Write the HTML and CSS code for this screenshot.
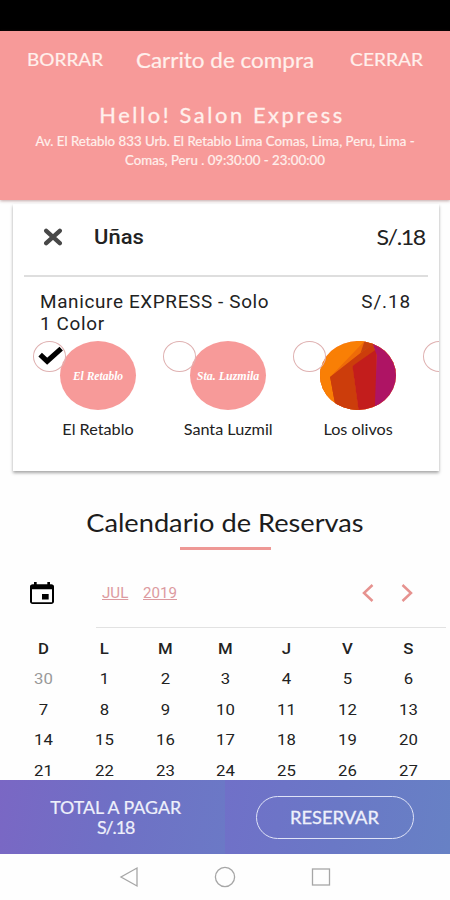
FILE: index.html
```html
<!DOCTYPE html>
<html lang="es">
<head>
<meta charset="utf-8">
<title>Carrito de compra</title>
<link rel="stylesheet" href="styles.css">
</head>
<body>
<div class="screen">
  <div class="statusbar"></div>
  <header class="header">
    <div class="topbar">
      <span class="action t-left">BORRAR</span>
      <h1 class="page-title">Carrito de compra</h1>
      <span class="action t-right">CERRAR</span>
    </div>
    <h2 class="salon">Hello! Salon Express</h2>
    <p class="address">Av. El Retablo 833 Urb. El Retablo Lima Comas, Lima, Peru, Lima -<br>Comas, Peru . 09:30:00 - 23:00:00</p>
  </header>

  <main class="content">
    <section class="card">
      <div class="card-head">
        <svg class="remove" viewBox="0 0 20 18" preserveAspectRatio="none"><path d="M3.2 2.8 16.8 15.2M16.8 2.8 3.2 15.2"/></svg>
        <span class="category t-left">Uñas</span>
        <span class="category-price t-right">S/.18</span>
      </div>
      <div class="service">
        <span class="service-name t-left">Manicure EXPRESS - Solo<br>1 Color</span>
        <span class="service-price t-right">S/.18</span>
      </div>
      <div class="places">
        <div class="place">
          <span class="ring"><svg viewBox="0 0 32 31"><path d="M6 13.500 13.500 20.500 28.500 7" class="tick"/></svg></span>
          <div class="logo"><span class="script">El Retablo</span></div>
          <span class="place-name">El Retablo</span>
        </div>
        <div class="place">
          <span class="ring"></span>
          <div class="logo"><span class="script wide">Sta. Luzmila</span></div>
          <span class="place-name">Santa Luzmil</span>
        </div>
        <div class="place">
          <span class="ring"></span>
          <div class="logo">
            <svg class="art" viewBox="0 0 75 69" preserveAspectRatio="none">
              <rect width="75" height="69" fill="#f97f05"/>
              <path d="M0 28 40 0H75V30L10 36V69H0Z" fill="#ee6b08"/>
              <path d="M0 26 36 0H44L10 36 16 69H0Z" fill="#f97f05"/>
              <path d="M10 36 52 3 60 8 32 25Z" fill="#d8500c"/>
              <path d="M44 0H56L52 4 40 12Z" fill="#c8430e"/>
              <path d="M10 36 32 25 38 69H16Z" fill="#cc3d0b"/>
              <path d="M10 36 40 12 52 4 55 11 32 25 38 69H16Z" fill="#cc3d0b"/>
              <path d="M32 25 56 8V69H38Z" fill="#c31d1c"/>
              <path d="M52 3 58 0H75V69H54L56 14Z" fill="#ae1464"/>
            </svg>
          </div>
          <span class="place-name">Los olivos</span>
        </div>
        <div class="place"><span class="ring"></span></div>
      </div>
    </section>

    <section class="calendar">
      <h3 class="cal-title"><span>Calendario de Reservas</span></h3>
      <div class="cal-bar">
        <svg class="cal-icon" viewBox="3 1 18 20" preserveAspectRatio="none"><path d="M17 12h-5v5h5v-5zM16 1v2H8V1H6v2H5c-1.1 0-2 .9-2 2v14c0 1.1.9 2 2 2h14c1.100 0 2-.9 2-2V5c0-1.100-.9-2-2-2h-1V1h-2zm3.500 18.500H4.500V7.500h15v12z"/></svg>
        <span class="month t-left">JUL</span>
        <span class="year t-left">2019</span>
        <svg class="chev first" viewBox="0 0 12 18"><path d="M10.500 1 2 9l8.500 8"/></svg>
        <svg class="chev" viewBox="0 0 12 18"><path d="M1.500 1 10 9l-8.500 8"/></svg>
      </div>
      <div class="grid">
        <b>D</b><b>L</b><b>M</b><b>M</b><b>J</b><b>V</b><b>S</b>
        <span class="out">30</span><span>1</span><span>2</span><span>3</span><span>4</span><span>5</span><span>6</span>
        <span>7</span><span>8</span><span>9</span><span>10</span><span>11</span><span>12</span><span>13</span>
        <span>14</span><span>15</span><span>16</span><span>17</span><span>18</span><span>19</span><span>20</span>
        <span>21</span><span>22</span><span>23</span><span>24</span><span>25</span><span>26</span><span>27</span>
      </div>
    </section>
  </main>

  <footer class="paybar">
    <div class="half total"><div class="total-text"><div>TOTAL A PAGAR</div><div class="amount">S/.18</div></div></div>
    <div class="half pay"><div class="reserve"><span>RESERVAR</span></div></div>
  </footer>
  <nav class="navbar">
    <svg viewBox="0 0 20 22"><path d="M18 2V20L2 11Z"/></svg>
    <svg viewBox="0 0 22 22"><circle cx="11" cy="11" r="9.600"/></svg>
    <svg viewBox="0 0 20 22"><rect x="1.500" y="3" width="17" height="16"/></svg>
  </nav>
</div>
</body>
</html>
```
FILE: styles.css
```css
* { box-sizing: border-box; }
body { margin: 0; background: #fefefe; font-family: Lato, sans-serif; color: #222; }
h1, h2, h3, p { margin: 0; font-weight: 400; }
.screen { width: 450px; height: 900px; display: flex; flex-direction: column; overflow: hidden; }
.t-left { display: inline-block; transform: scaleX(1.08); transform-origin: left; }
.t-right { display: inline-block; transform: scaleX(1.08); transform-origin: right; }

.statusbar { height: 31px; background: #000; flex: none; }
.header { height: 169px; flex: none; background: #f79a99; color: #fff0ec; text-align: center; box-shadow: 0 1px 3px rgba(120,60,60,.45); position: relative; }
.topbar { display: grid; grid-template-columns: 108px 1fr 108px; height: 58px; padding: 0 27px; align-items: center; line-height: 24px; white-space: nowrap; }
.action { font-size: 18px; padding-bottom: 2px; -webkit-text-stroke: .2px; }
.action.t-left { text-align: left; transform: scaleX(1.055); }
.action.t-right { text-align: right; transform: scaleX(1.065); }
.page-title { font-size: 21px; transform: scaleX(1.07); -webkit-text-stroke: .2px; }
.salon { font-size: 21px; line-height: 26px; letter-spacing: 2.5px; margin: 13px 6px 0 0; transform: scaleX(1.04); -webkit-text-stroke: .3px; }
.address { font-size: 12.5px; line-height: 19px; margin: 4px 0 0; white-space: nowrap; transform: scaleX(1.06); -webkit-text-stroke: .2px; }

.content { flex: 1; overflow: hidden; padding-top: 4px; }
.card { width: 426px; height: 267px; margin-left: 13px; background: #fff; box-shadow: 0 2px 3px rgba(0,0,0,.35); overflow: hidden; }
.card-head { height: 73px; margin: 0 11px; padding: 0 3px 6px 19px; border-bottom: 2px solid #dedede; display: flex; align-items: center; }
.remove { width: 20px; height: 18px; fill: none; stroke: #484848; stroke-width: 4.300; stroke-linecap: round; }
.category { font: 500 20px/24px Roboto, sans-serif; margin-left: 31px; transform: scaleX(1.1); }
.category-price { font-size: 21.500px; line-height: 22px; margin-left: auto; letter-spacing: -1.300px; }
.service { height: 59px; padding: 14px 28px 0 27px; display: flex; justify-content: space-between; font: 17.5px/22px Roboto, sans-serif; }
.service-name { letter-spacing: .6px; }
.service-price { letter-spacing: .8px; }
.places { display: flex; width: 520px; margin-left: 20px; }
.place { width: 130px; flex: none; display: grid; grid-template-columns: 27px 75px; align-content: start; padding-top: 5px; }
.ring { grid-area: 1 / 1; width: 33px; height: 31px; border: 1px solid #dfb1b1; border-radius: 50%; z-index: 1; }
.ring svg { display: block; width: 31px; height: 29px; overflow: visible; }
.tick { fill: none; stroke: #000; stroke-width: 5.500; }
.logo { grid-area: 1 / 2; width: 76px; height: 69px; border-radius: 50%; background: #f79a99; overflow: hidden; display: flex; align-items: center; justify-content: center; }
.art { width: 76px; height: 69px; }
.script { font: italic bold 11.500px/16px "Liberation Serif", serif; color: #fff; white-space: nowrap; }
.script.wide { transform: scaleX(1.04); }
.place-name { grid-area: 2 / 2; justify-self: center; font-size: 15px; line-height: 20px; margin: 9px 0 0 2px; white-space: nowrap; transform: scaleX(1.08); }

.cal-title { margin-top: 37px; font-size: 24.500px; line-height: 30px; text-align: center; height: 42px; color: #1c1c1c; }
.cal-title::after { content: ""; display: block; width: 91px; height: 3px; margin: 9px auto 0; background: #ee9895; }
.cal-title span { display: inline-block; transform: scaleX(1.11); }
.cal-bar { height: 78px; display: flex; align-items: center; padding: 7px 37px 0 30px; color: #dc9aa0; font: 14px/20px Roboto, sans-serif; background: linear-gradient(#e2e2e2, #e2e2e2) 96px 100% / 350px 1px no-repeat; }
.cal-icon { width: 24px; height: 22px; }
.month { margin-left: 48px; text-decoration: underline; }
.year { margin-left: 17px; text-decoration: underline; }
.chev { width: 12px; height: 18px; fill: none; stroke: #e6928f; stroke-width: 2.500; }
.chev.first { margin-left: auto; margin-right: 27px; }
.grid { display: grid; grid-template-columns: repeat(7, 60.800px); grid-auto-rows: 30.400px; margin: 6px 0 0 13px; text-align: center; font: 15.500px/30.400px Roboto, sans-serif; }
.grid > * { transform: scaleX(1.08); }
.grid b { font-weight: 500; }
.grid .out { color: #999; }

.paybar { height: 74px; flex: none; display: flex; color: #eef0fb; }
.half { width: 225px; flex: none; display: flex; align-items: center; background: linear-gradient(100deg, #7a67c4, #6f70c5 50%, #6b79c6); }
.pay { background: linear-gradient(100deg, #7070c8, #6a78c6 50%, #6781c5); }
.total { padding: 2px 0 0 7px; justify-content: center; }
.total-text { font-size: 17px; line-height: 20.500px; text-align: center; transform: scaleX(1.045); -webkit-text-stroke: .2px; }
.amount { letter-spacing: -1px; }
.reserve { width: 158px; height: 43px; margin-left: 31px; border: 1.500px solid #dfe3f7; border-radius: 22px; display: flex; align-items: center; justify-content: center; font-size: 17.500px; -webkit-text-stroke: .3px; }
.reserve span { transform: scaleX(1.045); }
.navbar { height: 46px; flex: none; display: flex; align-items: center; padding: 0 0 0 119px; gap: 75px; }
.navbar svg { width: 20px; height: 22px; fill: none; stroke: #a6a6a6; stroke-width: 1.300; }
.navbar svg:nth-child(2) { width: 22px; }
```
